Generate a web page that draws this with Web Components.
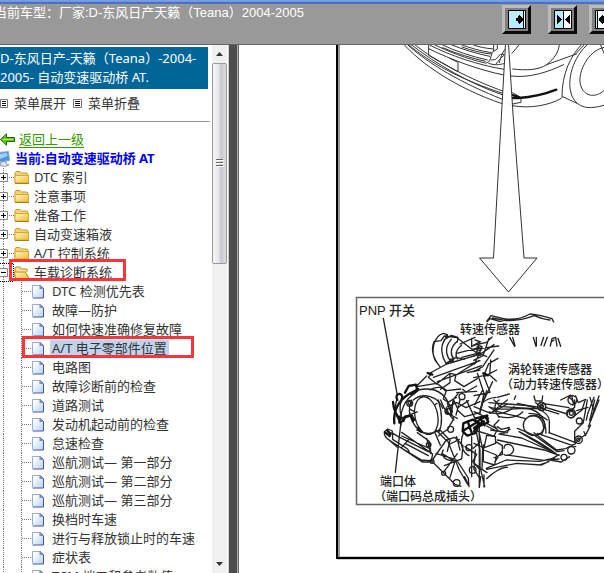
<!DOCTYPE html>
<html lang="zh-CN">
<head>
<meta charset="utf-8">
<title>D-东风日产天籁（Teana）2004-2005</title>
<style>
html,body{height:100%;margin:0}
body{font:13px/19px "Noto Sans","Noto Sans CJK SC",sans-serif;color:#333;background:#fff;overflow:hidden}
</style>
</head>
<body>
<manual-app></manual-app>
<script>
const define=(name,html,setup)=>customElements.define(name,class extends HTMLElement{
  connectedCallback(){
    if(this.shadowRoot)return;
    const t=document.createElement('template');
    t.innerHTML=html;
    this.attachShadow({mode:'open'}).append(t.content.cloneNode(true));
    if(setup)setup(this,this.shadowRoot);
  }
});

/* Header button: icon="right | both | left" */
define('frame-button',`<style>
:host{display:block;flex:none}
button{display:flex;align-items:center;justify-content:center;width:29px;height:29px;padding:0;background:#808080;border:3px solid;border-color:#bbb #0a0a0a #0a0a0a #bbb}
svg{display:block}
</style><button type="button"><svg width="18" height="19" viewBox="0 0 18 19"></svg></button>`,(h,r)=>{
  const k=h.getAttribute('icon');
  const split={right:15,both:9,left:2}[k];
  const body=`<path fill="#fff" stroke="#000" d="M.5.5h17v18H.5z"/><path fill="#b9ecff" d="M1 1h${split}v17H1z"/><path stroke="#000" d="M${split+.5} 1v17"/>`;
  const arrows={
    right:'<path d="M8 8h2V6h1V5h1v1h1v1h1v1h1v3h-1v1h-1v1h-1v1h-1v-1h-1v-2H8z"/>',
    both:'<path d="M3 5h1v1h1v1h1v1h1v1h1v1H7v1H6v1H5v1H4v1H3zM16 5h-1v1h-1v1h-1v1h-1v1h-1v1h1v1h1v1h1v1h1v1h1z"/>',
    left:'<path d="M11 8H9V6H8V5H7v1H6v1H5v1H4v3h1v1h1v1h1v1h1v-1h1v-2h2z"/>'};
  r.querySelector('svg').innerHTML=body+arrows[k];
  r.querySelector('button').setAttribute('aria-label',{right:'展开左侧',both:'左右平分',left:'展开右侧'}[k]);
});

define('top-bar',`<style>
:host{display:flex;justify-content:space-between;height:45px;box-sizing:border-box;flex:none;border-bottom:1px solid #666;overflow:hidden;background:linear-gradient(#7c9ee0 0 1px,#7397dc 1px 2px,#4a70ca 2px 4px,#999 4px)}
.t{font:13px/19px "Liberation Sans","Noto Sans CJK SC",sans-serif;color:#fff;margin:3px 0 0;text-indent:-6px;white-space:nowrap}
.b{display:flex;flex:none;width:102px;margin-top:5px;gap:17px;overflow:hidden}
.b frame-button:last-child{margin-left:-5px}
</style><h1 class="t">当前车型：厂家:D-东风日产天籁（Teana）2004-2005</h1>
<div class="b"><frame-button icon="right"></frame-button><frame-button icon="both"></frame-button><frame-button icon="left"></frame-button></div>`);

define('tree-row',`<style>
:host{display:flex;align-items:center;height:19px;position:relative;white-space:nowrap;box-sizing:border-box}
.lead{flex:none;width:14px;height:19px}
.icon{flex:none;width:16px;height:17px}
:host([kind=page]) .lead{width:32px}
:host([kind=page]) .icon{width:12px}
svg{display:block}
a{color:inherit;text-decoration:none;margin-left:2px;padding:0 2px;line-height:17px}
:host([kind=page]) a{margin-left:6px}
:host([selected]) a{background:#c0d2ec}
:host([marked])::after{content:"";position:absolute;border:3px solid #f8363a;box-sizing:border-box;height:22px;top:-4px;left:9px;width:117px}
:host([marked][kind=page])::after{top:-3px;left:22px;width:172px}
</style><svg class="lead" height="19"></svg><svg class="icon" viewBox="0 0 16 17"></svg><a href="#"><slot></slot></a>`,(h,r)=>{
  const k=h.getAttribute('kind'),lead=r.querySelector('.lead'),icon=r.querySelector('.icon');
  const dots='stroke="#777" stroke-dasharray="1 1" fill="none"';
  if(k==='page'){
    lead.innerHTML=`<path ${dots} d="M3.5 0v19M21.5 0v19M22 9.5h10"/>`;
    icon.setAttribute('viewBox','0 0 12 17');
    icon.innerHTML='<defs><linearGradient id="p" x2="1" y2="1"><stop offset=".15" stop-color="#fff"/><stop offset="1" stop-color="#b4d2fc"/></linearGradient></defs><path fill="url(#p)" d="M1 2h7l3 3v10H1z"/><path fill="none" stroke="#93acd8" d="M.5 14V2.5H8"/><path fill="none" stroke="#46578f" d="M8 2.5l3.5 3V15H.5"/><path fill="#7c8cc0" d="M7.5 2l4 4h-4z"/>';
  }else{
    lead.innerHTML=`<path ${dots} d="M3.5 0v19M9 9.5h5"/><path fill="#fff" stroke="#888" d="M-.5 5.5h8v8h-8z"/><path stroke="#000" d="M1 9.5h5${k==='open'?'':'M3.5 7v5'}"/>${k==='open'?'<path stroke="#000" stroke-dasharray="1 1" fill="none" d="M0 .5h13.5v18H0"/>':''}`;
    const g='<defs><linearGradient id="f" x2="1" y2="1"><stop stop-color="#fff6b6"/><stop offset="1" stop-color="#efbd35"/></linearGradient></defs>';
    icon.innerHTML=g+(k==='open'
      ?'<path fill="#ffe58a" stroke="#b98b20" d="M1 13V4l1-1h4l1 2h6v3"/><path fill="url(#f)" stroke="#b98b20" stroke-linejoin="round" d="M1.5 14.5L.5 8h11l3.500 6.500z"/>'
      :'<path fill="#f3d274" stroke="#c79d3a" d="M1 13.5V4l1-1.500h4L7.5 4H13l1 1v9H1z"/><path fill="url(#f)" stroke="#d5a73a" d="M1 6.5h13.500V14H1z"/><path stroke="#a77b22" d="M1 14.5h14"/>');
  }
});

define('side-title',`<style>:host{display:block;margin-right:3px;padding:2px 0;background:#069;color:#fff}</style><slot></slot>`);

define('menu-actions',`<style>
:host{display:flex;gap:7px;margin-top:4px;padding:0 0 8px;border-bottom:1px solid #999;margin-right:1px}
button{display:flex;align-items:center;gap:6px;padding:0;border:0;background:none;font:inherit;color:inherit;height:20px}
button:first-child{margin-left:-1px}
svg{display:block}
</style>
<button type="button"><svg width="8" height="9"><path fill="#fff" stroke="#777" d="M.5.5h7v8h-7z"/><path stroke="#111" d="M2 2.5h4M2 4.5h4M2 6.5h4"/></svg>菜单展开</button>
<button type="button"><svg width="9" height="9"><path fill="#fff" stroke="#777" d="M.5.5h8v8h-8z"/><path stroke="#111" d="M2 2.5h5M2 4.5h5M2 6.5h5"/></svg>菜单折叠</button>`);

define('back-link',`<style>
:host{display:flex;align-items:center;gap:4px;height:19px;margin-top:8px}
svg{display:block}a{color:#390;text-decoration:underline;text-underline-offset:3px}
</style><svg width="15" height="13"><path fill="#62c71a" stroke="#1c6b00" d="M.5 6.5L6.5.8V4.5h8v4h-8v3.700z"/><path stroke="#b5f04f" d="M3 6.5h10"/></svg><a href="#">返回上一级</a>`);

define('current-node',`<style>
:host{display:flex;align-items:center;gap:4px;height:19px;color:#00f;font-weight:700;white-space:nowrap}
svg{display:block}
</style><svg width="11" height="16"><path fill="#4b91e2" stroke="#8ba7cb" d="M-1 1.5L8.5.5l1 9L-1 11z"/><path fill="#9fd0ff" d="M0 3l7-1 .5 3L0 8z"/><path fill="#dfe6ef" stroke="#8c99ad" d="M1 11l5-.5.5 2.5 2.5 1-4 1.500-5-1z"/></svg><span><slot></slot></span>`);

define('scroll-rail',`<style>
:host{display:flex;flex-direction:column;width:15px;flex:none;background:#f0f0f0;align-items:center}
i{flex:none;height:18px;display:flex;align-items:center}
.thumb{width:100%;height:38%;box-sizing:border-box;border:1px solid #999;border-radius:2px;background:linear-gradient(90deg,#f8f8f8,#e6e6e8 45%,#c8c8ce 60%,#dcdce0);display:flex;align-items:center;justify-content:center}
.sp{flex:1}svg{display:block}
</style><i><svg width="7" height="4"><path fill="#333" d="M0 4l3.500-4L7 4z"/></svg></i>
<div class="thumb"><svg width="8" height="9"><path stroke="#666" d="M0 .5h7M0 3.5h7M0 6.5h7"/><path stroke="#fff" d="M1 1.5h7M1 4.5h7M1 7.5h7"/></svg></div><div class="sp"></div>
<i><svg width="7" height="4"><path fill="#333" d="M0 0l3.500 4L7 0z"/></svg></i>`);

define('side-nav',`<style>
:host{display:flex;width:228px;flex:none;min-height:0;background:#fff;overflow:hidden}
nav{flex:1;min-width:0;padding-top:2px;overflow:hidden}
scroll-rail{margin:0 1px}
</style><nav>
<side-title>D-东风日产-天籁（Teana）-2004-<br>2005- 自动变速驱动桥 AT.</side-title>
<menu-actions></menu-actions><back-link></back-link>
<current-node>当前:自动变速驱动桥 AT</current-node>
<tree-row>DTC 索引</tree-row><tree-row>注意事项</tree-row><tree-row>准备工作</tree-row><tree-row>自动变速箱液</tree-row><tree-row>A/T 控制系统</tree-row>
<tree-row kind="open" marked>车载诊断系统</tree-row>
<tree-row kind="page">DTC 检测优先表</tree-row><tree-row kind="page">故障—防护</tree-row><tree-row kind="page">如何快速准确修复故障</tree-row>
<tree-row kind="page" marked selected>A/T 电子零部件位置</tree-row><tree-row kind="page">电路图</tree-row><tree-row kind="page">故障诊断前的检查</tree-row>
<tree-row kind="page">道路测试</tree-row><tree-row kind="page">发动机起动前的检查</tree-row><tree-row kind="page">怠速检查</tree-row>
<tree-row kind="page">巡航测试— 第一部分</tree-row><tree-row kind="page">巡航测试— 第二部分</tree-row><tree-row kind="page">巡航测试— 第三部分</tree-row>
<tree-row kind="page">换档时车速</tree-row><tree-row kind="page">进行与释放锁止时的车速</tree-row><tree-row kind="page">症状表</tree-row><tree-row kind="page">TCM 端口和参考数值</tree-row>
</nav><scroll-rail></scroll-rail>`);

define('part-diagram',`<style>
:host{display:block;flex:1;min-width:0;overflow:hidden;background:#fff}
svg{display:block}
text{font:500 12px "Liberation Sans","Noto Sans CJK SC",sans-serif;fill:#222}
g{fill:none;stroke:#333;stroke-width:3;stroke-linejoin:round;stroke-linecap:round}
.g{stroke:#222;stroke-width:4}
.w{fill:#fff}.k{stroke-width:7;stroke:#111}.m{fill:#fff;stroke:none}.d{fill:#333}
</style><svg width="365" height="528" viewBox="239 45 365 528">
<!-- car front -->
<g transform="translate(302 0) scale(.3333)">
<path d="M303 130C355 190 460 263 600 311M312 130C380 193 480 250 604 299M325 132C400 190 500 250 605 286M336 132C400 185 510 240 607 275M320 134C385 190 480 240 605 281M380 132v34l88 49v-28l-24-12M384 136c65 32 140 58 222 72M380 146c70 34 150 64 226 79"/>
<path d="M395 133c40 20 100 44 155 56M418 133c40 20 90 36 138 47M422 143c40 18 90 32 128 41M445 133c35 15 80 28 118 36M475 133c30 11 60 20 93 25M480 141c30 11 60 18 86 21M510 133c20 8 40 12 65 14M586 133v14l-15 9-8 27-11 7M575 133v20M568 180l12-1 15-16h10M582 192c8-10 15-20 24-26"/>
<path d="M632 207c40 5 80 3 102-13 24-19 36-38 38-60M628 228c55 7 110-12 157-34M734 194l89-32M560 190c20 7 30 4 46 1M622 134c-18 15-25 33-30 54M630 160l22-26"/>
<path d="M632 278l25 15v14l-25 5M632 317c50 10 110-1 146-22l4-5 43 20"/><path class="k" stroke-width="5" d="M630 294h20c50-3 85-14 113-25M632 285l18 6"/>
<path d="M842 130c-36 36-62 90-62 160M860 130c-48 42-68 112-50 158 17 37 51 42 98 27M908 142c-41 5-77 61-74 104 6 45 47 51 74 24M894 130l14 34M820 163l30-32"/>
</g>
<path fill="#fff" stroke="#333" d="M505.500 44l-4 70-8 144h-14l29 34 28.500-34H524l-11-144-4.500-70z"/>
<!-- page frame -->
<path fill="none" stroke="#999" stroke-width="3" d="M338.500 44v514H604"/><path fill="none" stroke="#000" stroke-width="2" d="M337 44v514h267"/>
<path fill="none" stroke="#666" stroke-width="1.500" d="M604 297.500H356.500v207H604"/>
<!-- gearbox, upper left -->
<g class="g" transform="translate(350 290) scale(.3333)">
<path d="M100 85l41 225M252 155c-8 20-4 48 18 75M252 155l21-3M270 230l-14-18c-15-30-4-75 24-82l12 4M292 135l-8 15c-14 20-10 48 4 70M282 150l22-14 20 6-2 14M304 148c-20 22-15 46-5 62M320 155c-22 20-18 42-8 52M335 165c-18 15-20 30-13 42M273 152l10-14 38 5 70 54M330 162l45-20M365 145v25l25-15M375 150l15 5M320 190l70-18M335 202l55-14M288 220l30-18 25 6M235 252l55-30 98-29M250 262l140-50M262 275l132-48M230 258l-30 30M245 250l-10 12 25 20 40-32 18 4-4 18 28 18 40-24M300 250v28l-28 20M318 255l70-44M352 248l38-8M338 298l10 8 32-18"/>
<path d="M200 290l60-10 30 22 42-5M240 300c20-14 40-8 48 5l-8 22 14 10 25-15M320 308l60-4M325 310l-15 18 12 26 34-22M350 332l28 60M310 335l-8 40 20 10M292 340l20 50"/>
<path class="k" d="M165 308l11-20 22-4 4 18-18 12M142 330c-10-18 12-26 15-9l-4 14M205 297l-28 15c-28 18-48 48-44 88"/>
<path d="M195 310c-34 18-46 58-43 98M205 300c45-10 82 4 99 60M190 330c28-24 76-12 88 25M179 345c-6-4-7-10-1-11 9 0 9 10 1 11M233 323l-4 10M217 318l2 12M261 340l-12 9M289 353l8 20M181 358l14 8"/>
<circle cx="336" cy="320" r="9"/><circle cx="298" cy="364" r="9"/><circle class="d" cx="305" cy="212" r="5"/><path class="k" d="M233 249l14 5M150 387l30-10 14 12"/>
</g>
<!-- gearbox, lower left -->
<g class="g" transform="translate(350 400) scale(.3333)">
<ellipse class="w" cx="229" cy="47" rx="34" ry="57" transform="rotate(-12 229 47)"/>
<path d="M152 75l-16 142M140 0c-12 32 0 55 14 72M154 0c-8 24-2 48 7 64M170 48l32-12M185 0c-15 30-4 64 21 90M200 90c28 16 48 12 70-1M272 0l10 24 28 34-17 30-28 20M292 20l28-12 28 15 42-18M322 30l22 20 46-12M265 0c8 27 16 66 2 96M310 0l-5 25M330 0l-12 45M268 88l32 33-8 33M255 98l16 38"/>
<path d="M103 95l10-8 14 6 1 25 45 29 8 15 32 18 28 2M103 95c-2 12 5 20 17 27l22 20M125 98l20 12 90 45M155 108l87 39M122 123l95 63h26l5-24-93-65M157 146l60 36M165 130l70 37M175 120l-20 22"/>
<path d="M202 98l35 25 6 38M230 115l12 46M245 183l40 40 30 30 18 6M247 180l42-60 25-8 25 25-4 40-52 20M280 150c-8 10-1 32 30 32M275 160l40 24-15 48M320 110l10 40M300 132l28-14M282 215l40-54M292 120l36 90 26 45M320 180l35 54 2 26M340 100c-15 35 2 60 17 67M345 140l35 23-12 22 18 20M365 110v120M388 80v180M370 145l20-18M290 122l-32-32M258 160l50 16M344 230l12 26"/>
<circle cx="294" cy="34" r="9"/><circle cx="302" cy="88" r="9"/><circle cx="357" cy="143" r="9"/><circle cx="368" cy="210" r="10"/><circle cx="320" cy="249" r="10"/><circle cx="281" cy="220" r="6"/><circle cx="179" cy="10" r="9"/><circle cx="236" cy="134" r="7"/><circle cx="246" cy="184" r="6"/>
<path class="k" d="M148 50v18l12-5 6-14 20-2 3 16M106 98l13 10M112 92l10 10M340 70l28-11 20 10-10 30-26 8-14-13zM343 90l33-20M353 64l12 34M129 6c2 20 6 32 14 42M205 83l8 12"/>
</g>
<!-- gearbox, upper right -->
<g class="g" transform="translate(474 290) scale(.3333)">
<path d="M38 94l13-17 35 8c34 8 58 0 82-13l30 4 36 10 5 10M55 84l31 6c32 5 60 0 95-13 20 8 33 13 47 13M40 94l8-8 42 12M107 142l15 27M116 142l7 25M178 142l8 27M187 142v26M201 166l8-24M210 168l10-26M229 168l5-22 11-4 4 26M240 150l-8 5M252 145l8 24"/>
<path d="M0 165l38-8 16-16M0 178l74-10M0 198l26-10 34-24M45 145l-18 52-28 14M24 170l-22 52M60 180L26 230l-26 15M72 205l-28 16-15 36-30 6M68 240l-38 20 18 47-48 10M50 210l-3 45 20 18M10 250l20 60-12 55M18 155l-10 30 30 15M26 300l-24 44M38 302l-20 65M56 275l-26 55M66 322c-32 3-50 16-48 50M75 330c-20 14-12 36 0 52"/>
<circle cx="16" cy="174" r="7"/><path class="k" d="M28 250l14 6M5 385l35-8"/>
<path d="M45 338c50 4 100 6 139 12l70 22M70 322l36-10M180 318l4 15h20l2-15M125 318l-4 10M205 340l80 13M260 330l30-15M295 345c-20-8-15-28 2-28 20 5 10 28-2 28M286 322l18 18M294 320l4 22M305 318l8 20 22-10M375 318l-25 72M360 322l-18 46-5 22M348 322l10 35M342 352l-34 10"/>
<circle cx="203" cy="350" r="12"/><circle cx="202" cy="350" r="5"/><circle cx="291" cy="372" r="12"/>
<path d="M45 350c30 25 60 18 120 40M165 370c30 0 40 10 55 20M120 350c-20 20-50 26-75 16"/>
</g>
<!-- gearbox, lower right -->
<g class="g" transform="translate(474 400) scale(.3333)">
<ellipse class="w" cx="180" cy="76" rx="32" ry="30"/><path d="M165 49c38-8 52 28 38 55M130 10c50 10 94 22 96 52v37M48 22c50 15 95-5 128 8 24 8 39 30 40 70M76 50c20 4 50 6 70-14M60 0l20 20 106 6M185 8l24 18M215 22l65 20M296 52l28-22 9-28M302 0v22l-20 14M340 0l-12 68-26 26v30M375 0l-32 80M362 0l-15 62M350 75l-14 28-28 20M330 95l5 12"/>
<circle cx="203" cy="19" r="12"/><circle cx="203" cy="19" r="5"/><circle cx="291" cy="40" r="13"/><circle cx="292" cy="40" r="6"/><circle cx="316" cy="63" r="9"/><circle cx="314" cy="119" r="11"/><circle cx="313" cy="119" r="5"/><circle cx="292" cy="151" r="11"/><circle cx="270" cy="172" r="9"/>
<path d="M130 85l50 20 70 50 20-3M140 98l105 62M180 98l68 52 27-4 30-15M190 100l115 40M225 98l80 30M135 95c40 20 80 40 115 70M70 80l12 8 24-6-6 16-20 2M50 90l40 6 18-8M75 60l-15 16 12 15M75 102l68 12 103 46M70 120l140 30 45 16"/>
<path d="M0 130l30 14 8-38 26 4 1 20-36 14M28 135v50l34 10 5-30-37-15M65 125l20 12v26l-25 10M90 145c0-20 28-14 29 6-7 18-25 17-29 12M83 155l-20 30M37 205l60-25 100 4 45-10M38 208l90-18 75 5 20-10M38 236c20-20 48-36 62-34M100 165l110 16 45-4M255 164l-28 16 35 6 25-16M225 185l-24 8"/>
<path d="M0 20l50 20 50-40M50 40l50-28M0 35l44 20M8 100l10 50 0 50 14 60M16 100l10 48-2 60 15 10M4 150l-4 58 16 25M20 230l-4 32M30 225v36M0 90l65 20M60 108l8-15-30-15M38 70l30 16M0 190l18 12"/>
<path class="k" d="M8 65l30-18 4 20-28 12zM0 95l7-10M0 84l30-20M20 58l12 18M33 50l10 14"/>
</g>
<!-- labels -->
<path class="m" d="M457 322h66v14h-66zM507 362h97v31h-97z"/>
<text x="359" y="315" style="font-size:13px">PNP 开关</text><text x="460" y="334">转速传感器</text>
<text x="508" y="374">涡轮转速传感器</text><text x="501" y="389">（动力转速传感器）</text>
<text x="380" y="486">端口体</text><text x="374" y="501">（端口码总成插头）</text>
</svg>`);

define('manual-app',`<style>
:host{display:flex;flex-direction:column;height:100%}
main{flex:1;min-height:0;display:flex}
.split{flex:none;width:8px;background:#4d4d4d;border:solid #aaa;border-width:0 1px 0 0;border-left:1px solid #ccc}
part-diagram{border-left:1px solid #666}
</style><top-bar></top-bar><main><side-nav></side-nav><div class="split" role="separator"></div><part-diagram></part-diagram></main>`);
</script>
</body>
</html>
